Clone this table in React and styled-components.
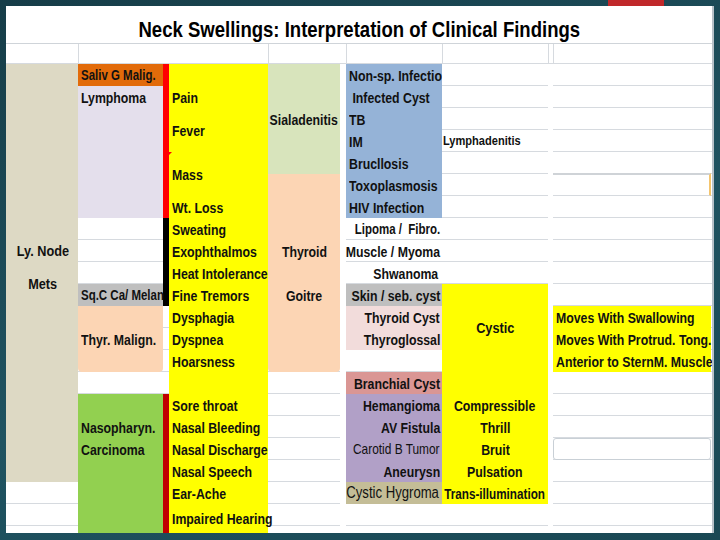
import styled, { createGlobalStyle } from "styled-components";

const GlobalStyle = createGlobalStyle`
  html, body {
    margin: 0;
    padding: 0;
  }
  body {
    width: 720px;
    height: 540px;
    overflow: hidden;
    background: #1c4a56;
    font-family: "Liberation Sans", Arial, sans-serif;
  }
`;

const COLS = "72px 85px 6px 99px 72px 6px 96px 106px 5px 158px";

// no Arial Narrow here: squeeze Liberation Sans instead
const NARROW = 0.82;

const Slide = styled.div`
  width: 720px;
  height: 540px;
  box-sizing: border-box;
  padding: 0 6px 7px 6px;
  background: linear-gradient(160deg, #163d48 0%, #1f5361 55%, #1a4854 100%);
  display: flex;
  flex-direction: column;
`;

const TopStrip = styled.div`
  height: 6px;
  flex: none;
  display: flex;
`;

const Tab = styled.div`
  width: 56px;
  margin-left: 602px;
  background: #c0282a;
`;

const Panel = styled.div`
  flex: 1;
  background: #fff;
  display: flex;
  flex-direction: column;
  border-right: 2px solid #b7c1c8;
  overflow: hidden;
`;

const TitleRow = styled.div`
  height: 38px;
  flex: none;
  box-sizing: border-box;
  border-bottom: 1px solid #cfd4d9;
  display: flex;
  align-items: center;
  justify-content: center;
  padding-top: 10px;
  font-size: 22.6px;
  font-weight: 700;
  color: #000;
`;

const TitleText = styled.span`
  display: inline-block;
  white-space: nowrap;
  transform: scaleX(${NARROW});
`;

const HeaderRow = styled.div`
  height: 20px;
  flex: none;
  box-sizing: border-box;
  display: grid;
  grid-template-columns: ${COLS};
  border-bottom: 1px solid #d6dadf;
`;

const HeadCell = styled.div`
  grid-column: ${(p) => p.$col};
  border-left: 1px solid #d6dadf;
`;

const Body = styled.div`
  flex: 1;
  display: grid;
  grid-template-columns: ${COLS};
  grid-template-rows: repeat(20, 22px) 1fr;
  background: repeating-linear-gradient(
    to bottom,
    #fff 0 21px,
    #d6dadf 21px 22px
  );
`;

const Fill = styled.div`
  grid-row: ${(p) => p.$row};
  grid-column: ${(p) => p.$col};
  background: ${(p) => p.$bg};
  border-radius: ${(p) => (p.$round ? "0 0 4px 4px" : "0")};
`;

const RedBar = styled(Fill)`
  position: relative;
  &::after {
    content: "";
    position: absolute;
    top: 88px;
    left: 5px;
    border-top: 4px solid #f00;
    border-right: 4px solid transparent;
  }
`;

const Cell = styled.div`
  grid-row: ${(p) => p.$row};
  grid-column: ${(p) => p.$col};
  min-width: 0;
  display: flex;
  align-items: center;
  justify-content: ${(p) =>
    p.$align === "right" ? "flex-end" : p.$align === "center" ? "center" : "flex-start"};
  padding: 0 ${(p) => p.$pr ?? 2}px 0 ${(p) => p.$pl ?? 3}px;
  background: ${(p) => p.$bg || "transparent"};
  font-size: ${(p) => p.$size || 15}px;
  font-weight: ${(p) => (p.$light ? 400 : 700)};
  color: #111;
  line-height: 1;
`;

const Txt = styled.span`
  display: inline-block;
  flex: none;
  white-space: pre;
  transform: scaleX(${(p) => p.$sx || NARROW});
  transform-origin: ${(p) => p.$origin};
`;

const ORIGIN = { left: "left center", center: "center center", right: "right center" };

const Label = ({ children, $align = "left", $sx, ...rest }) => (
  <Cell $align={$align} {...rest}>
    <Txt $origin={ORIGIN[$align]} $sx={$sx}>
      {children}
    </Txt>
  </Cell>
);

const CellBox = styled.div`
  grid-row: ${(p) => p.$row};
  grid-column: 10;
  box-sizing: border-box;
  background: #fff;
  border: 1px solid #c9d0d6;
  border-radius: 3px;
`;

const MarkedRow = styled.div`
  grid-row: ${(p) => p.$row};
  grid-column: 10;
  background: #fff;
  border-top: 2px solid #cfd3d7;
  border-bottom: 1px solid #d6dadf;
  border-right: 2px solid #f4c56e;
  margin-top: -1px;
`;

const symptoms = [
  ["Pain", "2"],
  ["Fever", "3 / 5"],
  ["Mass", "5 / 7"],
  ["Wt. Loss", "7"],
  ["Sweating", "8"],
  ["Exophthalmos", "9"],
  ["Heat Intolerance", "10"],
  ["Fine Tremors", "11"],
  ["Dysphagia", "12"],
  ["Dyspnea", "13"],
  ["Hoarsness", "14"],
  ["Sore throat", "16"],
  ["Nasal Bleeding", "17"],
  ["Nasal Discharge", "18"],
  ["Nasal Speech", "19"],
  ["Ear-Ache", "20"],
  ["Impaired Hearing", "21"],
];

const infections = ["Non-sp. Infectio", " Infected Cyst", "TB", "IM", "Brucllosis", "Toxoplasmosis", "HIV Infection"];

const vascular = [
  ["Hemangioma", 16],
  ["AV Fistula", 17],
  ["Carotid B Tumor", 18, true],
  ["Aneurysn", 19],
];

const signs = ["Compressible", "Thrill", "Bruit", "Pulsation", "Trans-illumination"];

const moves = ["Moves With Swallowing", "Moves With Protrud. Tong.", "Anterior to SternM. Muscle"];

export default function App() {
  return (
    <>
      <GlobalStyle />
      <Slide>
        <TopStrip>
          <Tab />
        </TopStrip>
        <Panel>
          <TitleRow>
            <TitleText>Neck Swellings: Interpretation of Clinical Findings</TitleText>
          </TitleRow>
          <HeaderRow>
            <HeadCell $col="2 / 5" />
            <HeadCell $col="5 / 7" />
            <HeadCell $col="7" />
            <HeadCell $col="8" />
            <HeadCell $col="9" />
            <HeadCell $col="10" />
          </HeaderRow>
          <Body>
            {/* gaps between column groups */}
            <Fill $row="1 / 22" $col="6" $bg="#fff" />
            <Fill $row="1 / 22" $col="9" $bg="#fff" />

            {/* column A */}
            <Fill $row="1 / 20" $col="1" $bg="#ddd9c4" />
            <Label $row="9" $col="1" $align="center" $size={15.5}>Ly. Node</Label>
            <Label $row="10 / 12" $col="1" $align="center" $size={15.5}>Mets</Label>

            {/* column B */}
            <Label $row="1" $col="2" $bg="#e26b0a" $size={14}>Saliv G Malig.</Label>
            <Fill $row="2 / 8" $col="2" $bg="#e4dfec" />
            <Label $row="2" $col="2">Lymphoma</Label>
            <Label $row="11" $col="2" $bg="#bfbfbf" $size={14}>Sq.C Ca/ Melan</Label>
            <Fill $row="12 / 15" $col="2" $bg="#fcd5b4" $round />
            <Label $row="12 / 15" $col="2">Thyr. Malign.</Label>
            <Fill $row="16 / 22" $col="2" $bg="#92d050" />
            <Label $row="17" $col="2">Nasopharyn.</Label>
            <Label $row="18" $col="2">Carcinoma</Label>

            {/* marker bar */}
            <RedBar $row="1 / 8" $col="3" $bg="#f00" />
            <Fill $row="8 / 12" $col="3" $bg="#000" />
            <Fill $row="16 / 22" $col="3" $bg="#c00000" />

            {/* column C: symptoms */}
            <Fill $row="1 / 22" $col="4" $bg="#ffff00" />
            {symptoms.map(([text, row]) => (
              <Label key={text} $row={row} $col="4" $pr={0}>
                {text}
              </Label>
            ))}

            {/* column D */}
            <Fill $row="1 / 6" $col="5" $bg="#d8e4bc" />
            <Label $row="1 / 6" $col="5" $align="center" $pl={0} $pr={0}>Sialadenitis</Label>
            <Fill $row="6 / 15" $col="5" $bg="#fcd5b4" $round />
            <Label $row="9" $col="5" $align="center">Thyroid</Label>
            <Label $row="11" $col="5" $align="center">Goitre</Label>

            {/* column E */}
            <Fill $row="1 / 8" $col="7" $bg="#95b3d7" />
            {infections.map((text, i) => (
              <Label key={text} $row={i + 1} $col="7" $pr={0}>
                {text}
              </Label>
            ))}
            <Label $row="8" $col="7" $align="right" $size={14}>{"Lipoma /  Fibro."}</Label>
            <Label $row="9" $col="7" $align="right" $pl={0}>Muscle / Myoma</Label>
            <Label $row="10" $col="7" $align="right" $pr={4}>Shwanoma</Label>
            <Label $row="11" $col="7" $align="right" $bg="#bfbfbf">Skin / seb. cyst</Label>
            <Fill $row="12 / 14" $col="7" $bg="#f2dcdb" />
            <Label $row="12" $col="7" $align="right">Thyroid Cyst</Label>
            <Label $row="13" $col="7" $align="right">Thyroglossal</Label>
            <Label $row="15" $col="7" $align="right" $bg="#da9694">Branchial Cyst</Label>
            <Fill $row="16 / 20" $col="7" $bg="#b1a0c7" />
            {vascular.map(([text, row, light]) => (
              <Label key={text} $row={row} $col="7" $align="right" $light={light} $size={light ? 14.5 : 15}>
                {text}
              </Label>
            ))}
            <Label $row="20" $col="7" $align="right" $bg="#c4bd97" $light $size={16} $pr={3}>
              Cystic Hygroma
            </Label>

            {/* column F */}
            <Label $row="4" $col="8" $size={13.5} $pl={1}>Lymphadenitis</Label>
            <Fill $row="11 / 21" $col="8" $bg="#ffff00" />
            <Label $row="11 / 15" $col="8" $align="center" $size={15.5}>Cystic</Label>
            {signs.map((text, i) => (
              <Label key={text} $row={16 + i} $col="8" $align="center" $pl={0} $pr={0} $sx={i === 4 ? 0.78 : NARROW}>
                {text}
              </Label>
            ))}

            {/* column G */}
            <MarkedRow $row="6" />
            <Fill $row="12 / 15" $col="10" $bg="#ffff00" />
            {moves.map((text, i) => (
              <Label key={text} $row={12 + i} $col="10">
                {text}
              </Label>
            ))}
            <CellBox $row="18" />
          </Body>
        </Panel>
      </Slide>
    </>
  );
}
